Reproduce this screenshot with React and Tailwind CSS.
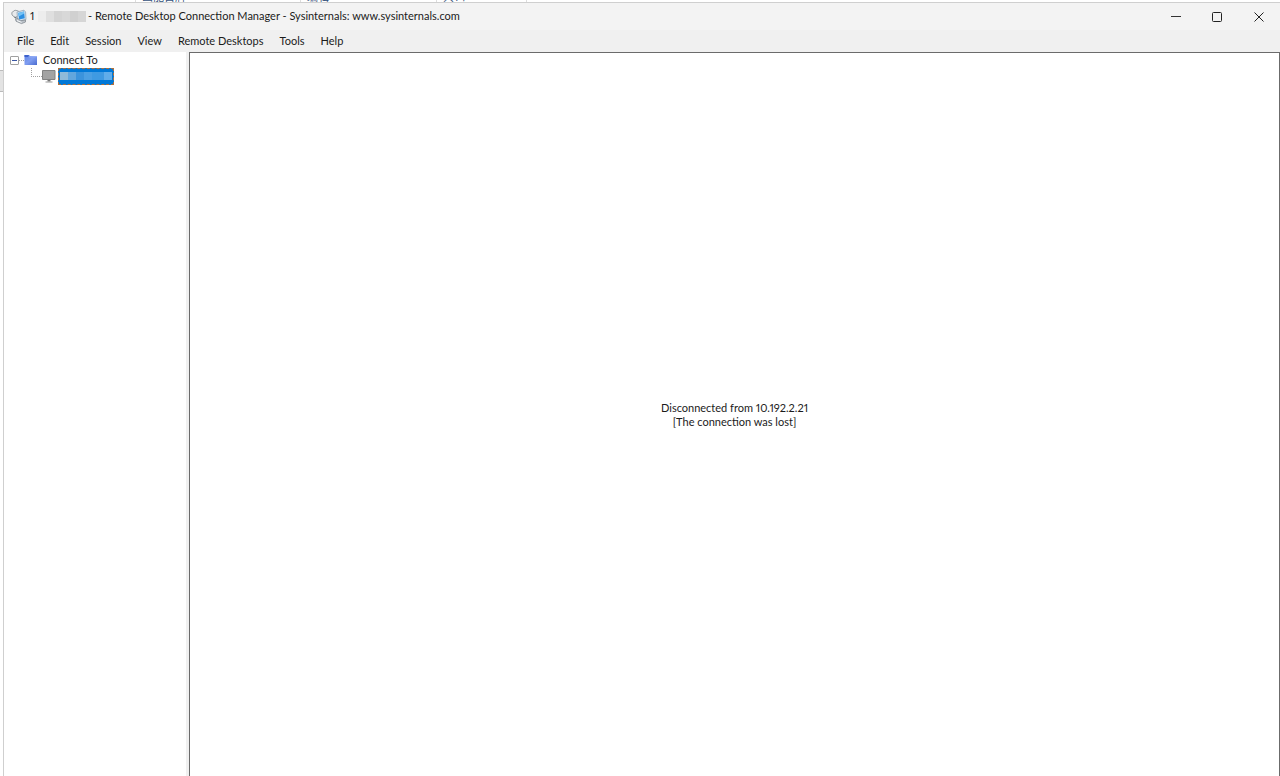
import React from 'react';

const menuItems = ['File', 'Edit', 'Session', 'View', 'Remote Desktops', 'Tools', 'Help'];

const AppIcon = () => (
  <svg className="w-4 h-4 shrink-0" viewBox="0 0 16 16" aria-hidden="true">
    <path d="M0.8 3.5 4 1.2 7.5 2 7 7 4 8.5 1 6Z" fill="#e8eaec" stroke="#92989e" strokeWidth="0.9" />
    <path d="M2.5 7.5 6 8.5 4.5 9.5Z" fill="#6d7479" />
    <path d="M6 3 13 1.2 14.6 3 15 10.5 9 11.8 6.5 10Z" fill="#d5e4f1" stroke="#8fa3b6" strokeWidth="0.8" />
    <path d="M7.2 4 13 2.5 13.8 9.2 8.2 10.4Z" fill="#2c8fe2" />
    <path d="M7.2 4 13 2.5 13.2 4.5 7.8 7.5Z" fill="#74c2f5" />
    <path d="M4.5 9.8 7 9.5 9.5 11.8 14.5 11 14.5 13 10.5 14.6 5 12.2Z" fill="#bcc3ca" stroke="#858c93" strokeWidth="0.8" />
    <path d="M6 11.5 10.5 13.3" stroke="#f5f7f8" />
  </svg>
);

const FolderIcon = () => (
  <svg className="w-[14px] h-3 shrink-0" viewBox="0 0 14 12" aria-hidden="true">
    <defs>
      <linearGradient id="folder" x1="0" y1="0" x2="1" y2="1">
        <stop offset="0" stopColor="#5f83e4" />
        <stop offset="0.5" stopColor="#7f9df0" />
        <stop offset="1" stopColor="#4a6cd0" />
      </linearGradient>
    </defs>
    <path d="M0.5 1h4.5l1 1h7v9h-12.5z" fill="url(#folder)" />
    <path d="M0.5 1h4.5l-1 2h-3.5z" fill="#3d61cc" />
    <path d="M5 3 13 2.5" stroke="#9db5f7" strokeWidth="0.8" />
  </svg>
);

const MonitorIcon = () => (
  <svg className="w-[14px] h-[13px] shrink-0" viewBox="0 0 14 13" aria-hidden="true">
    <path d="M0.5 0.5h12.5v9h-12.5z" fill="#a3a3a3" stroke="#828282" />
    <path d="M5.5 10h3v1.5h-3z" fill="#777" />
    <path d="M3.5 11.5h7v1h-7z" fill="#999" />
  </svg>
);

const TitleBar = () => (
  <header className="flex h-[27px] items-center bg-[#f3f3f3] pl-[7px]">
    <AppIcon />
    <h1 className="flex flex-1 items-center whitespace-nowrap pl-[3px] font-normal">
      <span className="w-2">1</span>
      <span className="mr-[2px] flex h-[11px] w-12">
        <span className="flex-1 bg-[#ededed]" />
        <span className="flex-1 bg-[#dfdfdf]" />
        <span className="flex-1 bg-[#d4d4d4]" />
        <span className="flex-1 bg-[#d8d8d8]" />
        <span className="flex-1 bg-[#d0d0d0]" />
        <span className="flex-1 bg-[#d6d6d6]" />
      </span>
      - Remote Desktop Connection Manager - Sysinternals: www.sysinternals.com
    </h1>
    <div className="flex h-full">
      <button aria-label="Minimize" className="flex w-[41px] items-center justify-center">
        <svg className="w-[10px] h-[10px]" viewBox="0 0 10 10">
          <path d="M0 4.5h10" stroke="#333" />
        </svg>
      </button>
      <button aria-label="Maximize" className="flex w-[41px] items-center justify-center">
        <svg className="w-[10px] h-[10px]" viewBox="0 0 10 10">
          <rect x="0.5" y="0.5" width="9" height="9" rx="1" fill="none" stroke="#222" />
        </svg>
      </button>
      <button aria-label="Close" className="flex w-[43px] items-center justify-center">
        <svg className="w-[10px] h-[10px]" viewBox="0 0 10 10">
          <path d="M0.5 0.5l9 9M9.5 0.5l-9 9" stroke="#222" />
        </svg>
      </button>
    </div>
  </header>
);

const MenuBar = () => (
  <nav className="flex h-[22px] items-center bg-[#f0f0f0] pl-[5px]">
    {menuItems.map((item) => (
      <button key={item} className="whitespace-nowrap px-2 leading-4">
        {item}
      </button>
    ))}
  </nav>
);

const ConnectionTree = () => (
  <aside className="w-[182px] shrink-0 bg-white pl-[6px]">
    <div className="flex h-4 items-center">
      <button
        aria-label="Collapse Connect To"
        className="flex h-[9px] w-[9px] items-center justify-center rounded-[1px] border border-[#a0a0a0] bg-white"
      >
        <span className="h-px w-[5px] bg-[#3b57a4]" />
      </button>
      <span className="w-[5px] border-t border-dotted border-[#a0a0a0]" />
      <FolderIcon />
      <span className="pl-[5px]">Connect To</span>
    </div>
    <div className="flex h-[17px] items-center pl-[21px]">
      <span className="h-[9px] w-[11px] self-start border-b border-l border-dotted border-[#a0a0a0]" />
      <MonitorIcon />
      <button
        aria-label="Selected server"
        className="ml-[2px] flex h-[17px] w-14 border border-dashed border-[#b0703c] bg-[#0078d7] px-px pt-[3px]"
      >
        <span className="h-2 w-2 bg-[#8fbad9]" />
        <span className="h-2 w-2 bg-[#62a6dd]" />
        <span className="h-2 w-2 bg-[#3b93dc]" />
        <span className="h-2 w-2 bg-[#4b9fe3]" />
        <span className="h-2 w-3 bg-[#3f9ae2]" />
        <span className="h-2 flex-1 bg-[#60adea]" />
      </button>
    </div>
  </aside>
);

const App = () => {
  return (
    <div className="flex h-screen flex-col overflow-hidden bg-white font-['Lato','Noto_Sans_CJK_SC',sans-serif] text-[11px] proportional-nums text-[#1b1b1b]">
      <div className="flex h-[2px] shrink-0 items-end overflow-hidden pl-[135px] text-[#34527c]">
        <span className="w-[165px] border-l border-[#ddd] pl-[6px] leading-[10px]">画能百牌</span>
        <span className="w-[136px] border-l border-[#ddd] pl-[6px] leading-[10px]">编辑</span>
        <span className="w-[91px] border-x border-[#ddd] pl-[6px] leading-[10px]">共1个</span>
      </div>
      <div className="flex min-h-0 flex-1">
        <div className="flex w-[3px] shrink-0 flex-col pt-[68px]">
          <div className="h-[22px] border-y border-[#bbb] bg-[#e3e3e3]" />
        </div>
        <div className="flex min-w-0 flex-1 flex-col border-l border-t border-[#cfcfcf]">
          <TitleBar />
          <MenuBar />
          <div className="flex min-h-0 flex-1">
            <ConnectionTree />
            <div className="w-[3px] shrink-0 bg-[#f0f0f0]" />
            <main className="flex flex-1 items-center justify-center border-x border-t border-[#6b6b6b] bg-white text-center leading-[14px]">
              <p>
                Disconnected from 10.192.2.21
                <br />
                [The connection was lost]
              </p>
            </main>
          </div>
        </div>
      </div>
    </div>
  );
};

export default App;
